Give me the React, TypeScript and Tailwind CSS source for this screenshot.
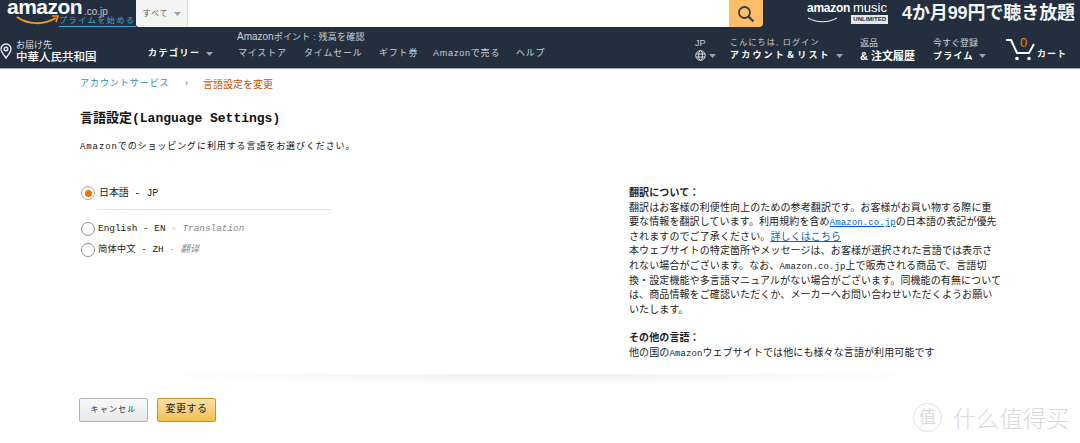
import React from "react";

const mono = "font-['Liberation_Mono','Noto_Sans_CJK_JP',monospace]";
const sans = "font-['Liberation_Sans','Noto_Sans_CJK_JP',sans-serif]";

function Caret({ className = "" }: { className?: string }) {
  return (
    <svg width="7" height="4" viewBox="0 0 7 4" className={className}>
      <path d="M0 0h7L3.5 4z" fill="#9aa3ad" />
    </svg>
  );
}

function Logo() {
  return (
    <div className="relative w-[136px] h-[27px] shrink-0 overflow-hidden">
      <span className={`absolute left-[7px] top-0 text-[21px] leading-[14px] font-bold tracking-[-0.5px] text-white ${sans}`}>amazon</span>
      <span className={`absolute left-[84px] top-[5px] text-[10px] leading-[14px] text-[#c4c8cc] ${sans}`}>.co.jp</span>
      <svg className="absolute left-[16px] top-[15px]" width="44" height="10" viewBox="0 0 44 10">
        <path d="M1 2c11 8 27 8 39 1" stroke="#f39a1f" strokeWidth="2" fill="none" />
        <path d="M36 1l6 0-2 6" stroke="#f39a1f" strokeWidth="1.5" fill="none" />
      </svg>
      <span className={`absolute left-[59px] top-[16px] text-[8px] leading-[10px] tracking-[1.6px] whitespace-nowrap text-[#3ea6d8] border-b border-[#3ea6d8] ${sans}`}>プライムを始める</span>
    </div>
  );
}

function TopBar() {
  return (
    <div className="flex h-[27px] bg-[#232f3e]">
      <Logo />
      <div className={`flex items-center justify-center gap-[5px] w-[52px] bg-[#f3f3f3] border-r border-[#ddd] text-[8px] tracking-[1px] text-[#555] rounded-bl-[3px] ${sans}`}>
        すべて <Caret />
      </div>
      <div className="w-[541px] bg-white" />
      <div className="w-[34px] bg-[#febd69] rounded-br-[4px] flex items-center justify-center">
        <svg width="18" height="18" viewBox="0 0 18 18" fill="none" stroke="#333d47" strokeWidth="1.8">
          <circle cx="7.5" cy="7.5" r="5.5" />
          <path d="M11.5 11.5l5 5" strokeWidth="2.2" />
        </svg>
      </div>
      <div className="flex items-center ml-[43px]">
        <div className="flex flex-col w-[82px] items-center relative h-[27px]">
          <div className={`flex items-baseline mt-[1px] text-white leading-[14px] ${sans}`}>
            <span className="text-[12px] font-bold tracking-[-0.3px]">amazon</span>
            <span className="text-[13px] ml-[3px]">music</span>
          </div>
          <div className="flex w-full items-center justify-between">
            <svg width="34" height="6" viewBox="0 0 34 6"><path d="M2 1c9 5 20 5 29 0" stroke="#fff" strokeWidth="1" fill="none" /></svg>
            <span className={`bg-[#e4e6e8] text-[#232f3e] text-[6px] leading-[9px] font-bold px-[2px] ${sans}`}>UNLIMITED</span>
          </div>
        </div>
        <span className={`ml-[14px] text-[18px] leading-[27px] font-bold text-[#f2f3f4] whitespace-nowrap tracking-[-0.1px] ${sans}`}>4か月99円で聴き放題</span>
      </div>
    </div>
  );
}

function NavBar() {
  const links: [string, string][] = [
    ["マイストア", "w-[66px]"],
    ["タイムセール", "w-[75px]"],
    ["ギフト券", "w-[54px]"],
    ["Amazonで売る", "w-[83px]"],
    ["ヘルプ", ""],
  ];
  return (
    <div className={`flex h-[42px] bg-[#232f3e] border-b border-[#a5a9ad] text-white ${sans}`}>
      <svg className="mt-[16px] shrink-0" width="12" height="16" viewBox="0 0 12 16" fill="none" stroke="#e8eaec" strokeWidth="1.4">
        <path d="M6 15C3 11 1 8.8 1 6a5 5 0 0 1 10 0c0 2.800-2 5-5 9z" />
        <circle cx="6" cy="6" r="1.800" />
      </svg>
      <div className="ml-[4px] w-[132px] mt-[13px] shrink-0">
        <div className="text-[9px] leading-[11px] text-[#d8dadc]">お届け先</div>
        <div className="text-[11.5px] leading-[13px] font-medium">中華人民共和国</div>
      </div>
      <div className="w-[89px] shrink-0 mt-[20px] flex items-center h-[13px] gap-[5px]">
        <span className="text-[9px] font-bold tracking-[1.5px]">カテゴリー</span>
        <Caret />
      </div>
      <div className="w-[458px] shrink-0 text-[#ccd0d4]">
        <div className="text-[10px] leading-[14px] mt-[3px] whitespace-nowrap">
          Amazon<span className="text-[9px] tracking-[0.2px]">ポイント : 残高を確認</span>
        </div>
        <div className="flex mt-[3px] text-[9px] leading-[13px] tracking-[0.8px] pl-[1px] whitespace-nowrap">
          {links.map(([t, w]) => (
            <span key={t} className={w}>{t}</span>
          ))}
        </div>
      </div>
      <div className="w-[35px] shrink-0 pt-[11px] text-[#ccd0d4]">
        <div className="text-[9px] leading-[11px]">JP</div>
        <div className="flex items-center gap-[3px] mt-[1px]">
          <svg width="11" height="11" viewBox="0 0 11 11" fill="none" stroke="#e8eaec" strokeWidth="0.9">
            <circle cx="5.5" cy="5.500" r="4.800" />
            <ellipse cx="5.5" cy="5.500" rx="2" ry="4.800" />
            <path d="M1 4h9M1 7h9" />
          </svg>
          <Caret />
        </div>
      </div>
      <div className="w-[130px] shrink-0 pt-[10px]">
        <div className="text-[8px] leading-[12px] tracking-[1.2px] text-[#ccd0d4] whitespace-nowrap">こんにちは, ログイン</div>
        <div className="flex items-center gap-[5px] text-[9px] leading-[13px] font-bold tracking-[2.2px] whitespace-nowrap">
          アカウント＆リスト <Caret />
        </div>
      </div>
      <div className="w-[73px] shrink-0 pt-[10px]">
        <div className="text-[9px] leading-[12px] text-[#ccd0d4]">返品</div>
        <div className="text-[11px] leading-[14px] font-bold whitespace-nowrap">& 注文履歴</div>
      </div>
      <div className="w-[73px] shrink-0 pt-[10px]">
        <div className="text-[9px] leading-[12px] text-[#ccd0d4] whitespace-nowrap">今すぐ登録</div>
        <div className="flex items-center gap-[5px] text-[9px] leading-[14px] font-bold tracking-[1.200px] whitespace-nowrap">
          プライム <Caret />
        </div>
      </div>
      <div className="relative w-[31px] shrink-0">
        <svg className="mt-[12px]" width="30" height="22" viewBox="0 0 30 22" fill="none" stroke="#fff" strokeWidth="2">
          <path d="M0 1h5l6 13h12l5-9" />
          <circle cx="11" cy="19.500" r="1.800" fill="#fff" stroke="none" />
          <circle cx="23" cy="19.500" r="1.800" fill="#fff" stroke="none" />
        </svg>
        <span className="absolute left-[14px] top-[9px] text-[13px] leading-[14px] text-[#f08804]">0</span>
      </div>
      <span className="mt-[21px] text-[9px] leading-[13px] font-bold tracking-[1px] whitespace-nowrap">カート</span>
    </div>
  );
}

function Radio({ checked = false }: { checked?: boolean }) {
  return (
    <span className={`flex items-center justify-center w-[14px] h-[14px] rounded-full border shrink-0 bg-white ${checked ? "border-[#a6a6a6]" : "border-[#8f8f8f]"}`}>
      {checked && <span className="block w-[7px] h-[7px] rounded-full bg-[#e77600]" />}
    </span>
  );
}

function Notes() {
  return (
    <div className={`w-[372px] pt-[17px] text-[10px] leading-[14.600px] tracking-[0.100px] text-[#222] whitespace-nowrap ${mono}`}>
      <div className="font-bold">翻訳について：</div>
      <div>翻訳はお客様の利便性向上のための参考翻訳です。お客様がお買い物する際に重</div>
      <div>要な情報を翻訳しています。利用規約を含め<span className="text-[#0066c0] underline text-[9px]">Amazon.co.jp</span>の日本語の表記が優先</div>
      <div>されますのでご了承ください。<span className="text-[#0066c0] underline">詳しくはこちら</span></div>
      <div>本ウェブサイトの特定箇所やメッセージは、お客様が選択された言語では表示さ</div>
      <div>れない場合がございます。なお、<span className="text-[9px]">Amazon.co.jp</span>上で販売される商品で、言語切</div>
      <div>換・設定機能や多言語マニュアルがない場合がございます。同機能の有無について</div>
      <div>は、商品情報をご確認いただくか、メーカーへお問い合わせいただくようお願い</div>
      <div>いたします。</div>
      <div className="font-bold mt-[14px]">その他の言語：</div>
      <div>他の国の<span className="text-[9px]">Amazon</span>ウェブサイトでは他にも様々な言語が利用可能です</div>
    </div>
  );
}

export default function App() {
  return (
    <div className={`relative w-[1080px] h-[443px] overflow-hidden bg-white ${mono}`}>
      <TopBar />
      <NavBar />
      <div className="pl-[80px]">
        <div className={`flex items-center h-[14px] mt-[8px] text-[9px] ${sans}`}>
          <span className="w-[105px] tracking-[0.950px] text-[#2f88c8]">アカウントサービス</span>
          <span className="w-[18px] text-[#555]">›</span>
          <span className="text-[10px] text-[#c45500]">言語設定を変更</span>
        </div>
        <h1 className="mt-[18px] text-[13px] leading-[20px] font-bold text-[#111]">言語設定(Language Settings)</h1>
        <p className="mt-[11px] text-[9px] leading-[14px] tracking-[0.900px] text-[#111]">Amazonでのショッピングに利用する言語をお選びください。</p>
        <div className="flex mt-[16px]">
          <div className="w-[549px] pt-[16px]">
            <label className="flex items-center h-[14px] pl-[1px] gap-[4px] text-[10px] text-[#222]">
              <Radio checked />
              <span className="tracking-[-0.100px]">日本語 - JP</span>
            </label>
            <div className="w-[234px] ml-[18px] mt-[9px] border-t border-[#e7e7e7]" />
            <label className="flex items-center h-[14px] mt-[12px] pl-[1px] gap-[3px] text-[9.400px] text-[#222]">
              <Radio />
              <span>English - EN <i className="text-[#888]">- Translation</i></span>
            </label>
            <label className="flex items-center h-[14px] mt-[7px] pl-[1px] gap-[3px] text-[9.400px] text-[#222]">
              <Radio />
              <span>简体中文 - ZH <i className="text-[#888]">- 翻译</i></span>
            </label>
          </div>
          <Notes />
        </div>
      </div>
      <div className="h-[12px] mt-[12px] mx-[130px] bg-[radial-gradient(ellipse_50%_100%_at_50%_0%,#f1f1f1,#ffffff)]" />
      <div className="flex gap-[9px] pl-[79px] mt-[12px]">
        <button className={`w-[69px] h-[24px] rounded-[2px] border border-[#adb1b8] bg-gradient-to-b from-[#f7f8fa] to-[#e7e9ec] text-[8px] tracking-[1.200px] text-[#333] ${sans}`}>キャンセル</button>
        <button className="w-[59px] h-[24px] rounded-[2px] border border-[#c89411] bg-gradient-to-b from-[#f7dfa5] to-[#f0c14b] text-[10px] tracking-[0.500px] text-[#222]">変更する</button>
      </div>
      <div className={`absolute left-[913px] top-[402px] flex items-center text-[#d9d9d9] ${sans}`}>
        <span className="flex items-center justify-center w-[29px] h-[29px] rounded-full border border-[#e0e0e0] text-[17px] leading-none">值</span>
        <span className="ml-[11px] text-[23px] leading-[30px] tracking-[0.300px] font-['Noto_Sans_CJK_SC',sans-serif] font-light">什么值得买</span>
      </div>
    </div>
  );
}
